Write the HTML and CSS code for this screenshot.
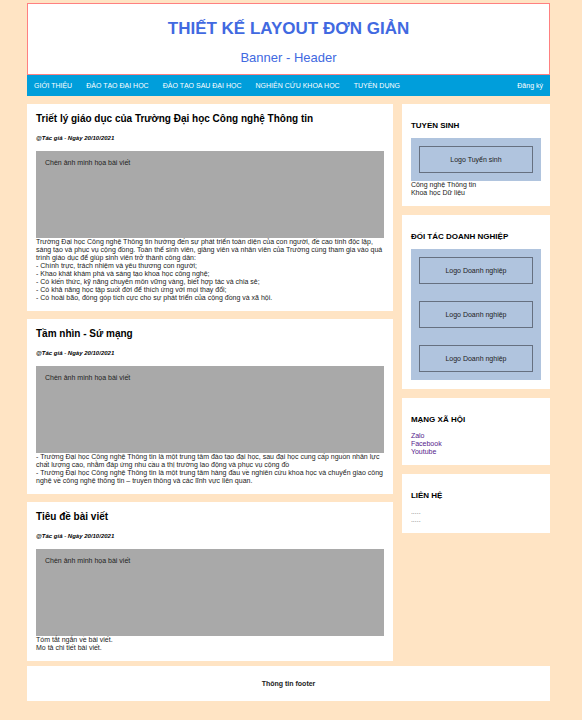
FILE: index.html
```html
<!DOCTYPE html>
<html lang="vi">
<head>
<meta charset="utf-8">
<meta name="viewport" content="width=device-width, initial-scale=1">
<title>Thiết kế layout đơn giản</title>
<link rel="stylesheet" href="styles.css">
</head>
<body>
<div class="page">
  <header class="banner">
    <h1>THIẾT KẾ LAYOUT ĐƠN GIẢN</h1>
    <p>Banner - Header</p>
  </header>
  <nav class="menu">
    <a href="#">GIỚI THIỆU</a>
    <a href="#">ĐÀO TẠO ĐẠI HỌC</a>
    <a href="#">ĐÀO TẠO SAU ĐẠI HỌC</a>
    <a href="#">NGHIÊN CỨU KHOA HỌC</a>
    <a href="#">TUYỂN DỤNG</a>
    <a href="#" class="signup">Đăng ký</a>
  </nav>
  <div class="columns">
    <main class="stack">
      <article class="post">
        <h2>Triết lý giáo dục của Trường Đại học Công nghệ Thông tin</h2>
        <h5>@Tác giả - Ngày 20/10/2021</h5>
        <div class="photo">Chèn ảnh minh họa bài viết</div>
        <p>Trường Đại học Công nghệ Thông tin hướng đến sự phát triển toàn diện của con người, đề cao tính độc lập, sáng tạo và phục vụ cộng đồng. Toàn thể sinh viên, giảng viên và nhân viên của Trường cùng tham gia vào quá trình giáo dục để giúp sinh viên trở thành công dân:<br>
        - Chính trực, trách nhiệm và yêu thương con người;<br>
        - Khao khát khám phá và sáng tạo khoa học công nghệ;<br>
        - Có kiến thức, kỹ năng chuyên môn vững vàng, biết hợp tác và chia sẻ;<br>
        - Có khả năng học tập suốt đời để thích ứng với mọi thay đổi;<br>
        - Có hoài bão, đóng góp tích cực cho sự phát triển của cộng đồng và xã hội.</p>
      </article>
      <article class="post">
        <h2>Tầm nhìn - Sứ mạng</h2>
        <h5>@Tác giả - Ngày 20/10/2021</h5>
        <div class="photo">Chèn ảnh minh họa bài viết</div>
        <p>- Trường Đại học Công nghệ Thông tin là một trung tâm đào tạo đại học, sau đại học cung cấp nguồn nhân lực chất lượng cao, nhằm đáp ứng nhu cầu a thị trường lao động và phục vụ cộng đồ<br>
        - Trường Đại học Công nghệ Thông tin là một trung tâm hàng đầu về nghiên cứu khoa học và chuyển giao công nghệ về công nghệ thông tin – truyền thông và các lĩnh vực liên quan.</p>
      </article>
      <article class="post">
        <h2>Tiêu đề bài viết</h2>
        <h5>@Tác giả - Ngày 20/10/2021</h5>
        <div class="photo">Chèn ảnh minh họa bài viết</div>
        <p>Tóm tắt ngắn về bài viết.<br>Mo tả chi tiết bài viết.</p>
      </article>
    </main>
    <aside class="stack side">
      <section class="card">
        <h3>TUYỂN SINH</h3>
        <div class="logos"><div class="logo">Logo Tuyển sinh</div></div>
        <p>Công nghệ Thông tin<br>Khoa học Dữ liệu</p>
      </section>
      <section class="card">
        <h3>ĐỐI TÁC DOANH NGHIỆP</h3>
        <div class="logos">
          <div class="logo">Logo Doanh nghiệp</div>
          <div class="logo">Logo Doanh nghiệp</div>
          <div class="logo">Logo Doanh nghiệp</div>
        </div>
      </section>
      <section class="card">
        <h3>MẠNG XÃ HỘI</h3>
        <p class="links"><a href="#">Zalo</a><a href="#">Facebook</a><a href="#">Youtube</a></p>
      </section>
      <section class="card">
        <h3>LIÊN HỆ</h3>
        <p class="contact">.....<br>.....</p>
      </section>
    </aside>
  </div>
  <footer class="footer">Thông tin footer</footer>
</div>
</body>
</html>
```
FILE: styles.css
```css
* {
  box-sizing: border-box;
}

body {
  margin: 0;
  background: #ffe4c4;
  color: #222;
  font-family: "Liberation Sans", Arial, sans-serif;
  font-size: 7px;
  line-height: 8px;
}

h1, h2, h3, h5, p {
  margin: 0;
}

.page {
  margin: 3px 32px 0 27px;
}

.banner {
  padding: 14px 8px 8px;
  border: 1px solid #ff8080;
  background: #fff;
  color: #4169e1;
  text-align: center;
}

.banner h1 {
  font-size: 17px;
  line-height: 22px;
}

.banner p {
  margin-top: 10px;
  font-size: 13px;
  line-height: 16px;
}

.menu {
  display: flex;
  gap: 14px;
  padding: 7px;
  background: #009edb;
}

.menu a {
  color: #fff;
  line-height: 7px;
  text-decoration: none;
  white-space: nowrap;
}

.menu .signup {
  margin-left: auto;
}

.columns {
  display: grid;
  grid-template-columns: minmax(0, 42fr) minmax(0, 17fr);
  align-items: start;
  gap: 9px;
  margin-top: 8px;
}

.stack {
  display: grid;
  gap: 8px;
}

.side {
  gap: 9px;
}

.post {
  padding: 8px 9px 9px;
  background: #fff;
}

.post h2 {
  color: #000;
  font-size: 10px;
  line-height: 14px;
}

.post h5 {
  margin: 8px 0 9px;
  color: #000;
  font-size: 6px;
  font-style: italic;
}

.photo {
  height: 87px;
  padding: 8px 9px;
  background: #a9a9a9;
}

.card {
  padding: 17px 9px 9px;
  background: #fff;
}

.card h3 {
  margin-bottom: 7px;
  color: #000;
  font-size: 8px;
  line-height: 10px;
}

.logos {
  display: grid;
  gap: 17px;
  padding: 8px;
  background: #b0c4de;
}

.logo {
  padding: 9px 8px 8px;
  border: 1px solid #667080;
  text-align: center;
}

.links a {
  display: block;
  color: #551a8b;
  text-decoration: none;
}

.contact {
  color: #777;
}

.footer {
  margin-top: 5px;
  padding: 14px 8px 13px;
  background: #fff;
  font-weight: bold;
  text-align: center;
}
```
